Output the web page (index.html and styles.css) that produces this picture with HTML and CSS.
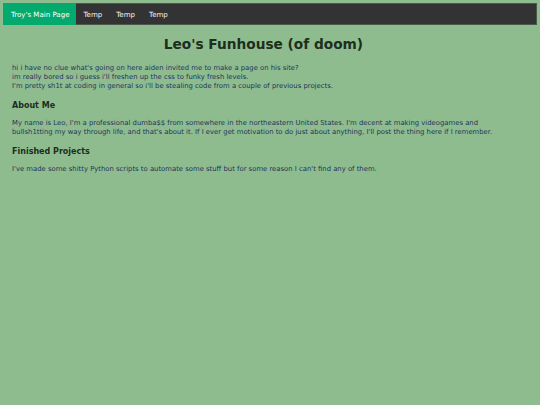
FILE: index.html
```html
<!DOCTYPE html>
<html lang="en">
<head>
<meta charset="utf-8">
<title>Leo's Funhouse</title>
<link rel="stylesheet" href="styles.css">
</head>
<body>
<nav class="topnav">
  <a class="active" href="#">Troy's Main Page</a>
  <a href="#">Temp</a>
  <a href="#">Temp</a>
  <a href="#">Temp</a>
</nav>
<main class="content">
  <h1 class="title">Leo's Funhouse (of doom)</h1>
  <p class="text">hi i have no clue what's going on here aiden invited me to make a page on his site?<br>im really bored so i guess i'll freshen up the css to funky fresh levels.<br>I'm pretty sh1t at coding in general so i'll be stealing code from a couple of previous projects.</p>
  <h2 class="section">About Me</h2>
  <p class="text">My name is Leo, I'm a professional dumba$$ from somewhere in the northeastern United States. I'm decent at making videogames and bullsh1tting my way through life, and that's about it. If I ever get motivation to do just about anything, I'll post the thing here if I remember.</p>
  <h2 class="section">Finished Projects</h2>
  <p class="text">I've made some shitty Python scripts to automate some stuff but for some reason I can't find any of them.</p>
</main>
</body>
</html>
```

FILE: styles.css
```css
html, body {
  margin: 0;
  padding: 0;
}
body {
  background: #8fbc8f;
  font-family: "DejaVu Sans", Verdana, sans-serif;
  padding: 3px;
}
.topnav {
  display: flex;
  height: 22px;
  background: #333333;
  border: 1px solid #4a5a4a;
  box-sizing: border-box;
}
.topnav a {
  display: flex;
  align-items: center;
  padding: 0 7px;
  color: #f2f2f2;
  text-decoration: none;
  font-size: 7.05px;
}
.topnav a.active {
  background: #04aa6d;
  color: #ffffff;
  margin: -1px 0 -1px -1px;
  padding-left: 8px;
}
.content {
  padding: 0 22px 0 9px;
}
.title {
  text-align: center;
  font-size: 13.7px;
  font-weight: bold;
  color: #1e2e1e;
  margin: 11px 0 12px;
  line-height: 16px;
}
.text {
  font-size: 6.85px;
  line-height: 9.2px;
  color: #1c355a;
  margin: 0 0 9px;
}
.section {
  font-size: 8px;
  font-weight: bold;
  color: #1e2e1e;
  margin: 0 0 8.5px;
  line-height: 10px;
}
```
